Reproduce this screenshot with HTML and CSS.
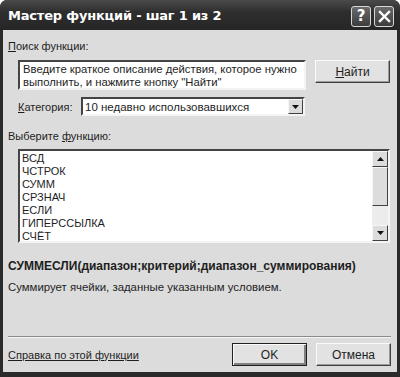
FILE: index.html
```html
<!DOCTYPE html>
<html lang="ru">
<head>
    <meta charset="UTF-8">
    <title>Мастер функций - шаг 1 из 2</title>
    <link rel="stylesheet" href="styles.css">
</head>
<body>
    <div class="window">
        <div class="titlebar">
            <span class="title">Мастер функций - шаг 1 из 2</span>
            <div class="title-buttons">
                <div class="tbtn">?</div>
                <div class="tbtn close">
                    <svg width="13" height="13" viewBox="0 0 13 13"><path d="M2 2 L11 11 M11 2 L2 11" stroke="#fff" stroke-width="2.4" stroke-linecap="square"/></svg>
                </div>
            </div>
        </div>

        <div class="body">
            <div class="label"><u>П</u>оиск функции:</div>

            <div class="search-row">
                <div class="textbox">Введите краткое описание действия, которое нужно<br>выполнить, и нажмите кнопку "Найти"</div>
                <div class="button"><u>Н</u>айти</div>
            </div>

            <div class="category-row">
                <span class="cat-label"><u>К</u>атегория:</span>
                <div class="combo">
                    <span class="combo-text">10 недавно использовавшихся</span>
                    <div class="combo-arrow">
                        <svg width="7" height="4" viewBox="0 0 7 4"><path d="M0 0 H7 L3.5 4 Z" fill="#111"/></svg>
                    </div>
                </div>
            </div>

            <div class="label list-label">Выберите <u>ф</u>ункцию:</div>

            <div class="listbox">
                <div class="items">
                    <div>ВСД</div>
                    <div>ЧСТРОК</div>
                    <div>СУММ</div>
                    <div>СРЗНАЧ</div>
                    <div>ЕСЛИ</div>
                    <div>ГИПЕРССЫЛКА</div>
                    <div>СЧЁТ</div>
                </div>
                <div class="scrollbar">
                    <div class="sb-btn">
                        <svg width="7" height="4" viewBox="0 0 7 4"><path d="M0 4 H7 L3.5 0 Z" fill="#111"/></svg>
                    </div>
                    <div class="sb-thumb"></div>
                    <div class="sb-track"></div>
                    <div class="sb-btn">
                        <svg width="7" height="4" viewBox="0 0 7 4"><path d="M0 0 H7 L3.5 4 Z" fill="#111"/></svg>
                    </div>
                </div>
            </div>

            <div class="syntax">СУММЕСЛИ(диапазон;критерий;диапазон_суммирования)</div>
            <div class="desc">Суммирует ячейки, заданные указанным условием.</div>

            <div class="separator"></div>

            <div class="footer">
                <a class="help-link" href="#">Справка по этой функции</a>
                <div class="footer-buttons">
                    <div class="button default">OK</div>
                    <div class="button">Отмена</div>
                </div>
            </div>
        </div>
    </div>
</body>
</html>
```

FILE: styles.css
```css
* {
    margin: 0;
    padding: 0;
    box-sizing: border-box;
}

body {
    background: #ffffff;
    font-family: "Liberation Sans", Arial, sans-serif;
    font-size: 11px;
    color: #1e1e1e;
}

.window {
    width: 400px;
    height: 377px;
    display: flex;
    flex-direction: column;
    background: #2a2a2a;
    border-radius: 7px 7px 0 0;
    overflow: hidden;
}

.titlebar {
    height: 30px;
    display: flex;
    align-items: center;
    justify-content: space-between;
    padding: 0 6px 0 8px;
    background: linear-gradient(#4a4a4a, #2e2e2e 40%, #262626);
}

.title {
    font-family: "DejaVu Sans", sans-serif;
    font-weight: bold;
    font-size: 13px;
    color: #ffffff;
    letter-spacing: -0.2px;
}

.title-buttons {
    display: flex;
    gap: 3px;
    margin-top: 2px;
}

.tbtn {
    width: 20px;
    height: 21px;
    border: 1px solid #d8d8d8;
    border-radius: 3px;
    background: linear-gradient(#6a6a6a, #3c3c3c);
    color: #fff;
    font-family: "DejaVu Sans", sans-serif;
    font-weight: bold;
    font-size: 15px;
    display: flex;
    align-items: center;
    justify-content: center;
}

.body {
    flex: 1;
    margin: 0 3px 5px 3px;
    background: #dcdcdc;
    padding: 10px 6px 0 5px;
    display: flex;
    flex-direction: column;
}

.label {
    line-height: 13px;
}

.search-row {
    display: flex;
    gap: 9px;
    margin: 7px 0 0 10px;
    align-items: flex-start;
}

.textbox {
    width: 288px;
    height: 30px;
    background: #ffffff;
    border: 2px solid;
    border-color: #444 #f4f4f4 #f4f4f4 #444;
    padding: 1px 3px 0;
    font-size: 11.3px;
    line-height: 13px;
    white-space: nowrap;
    overflow: hidden;
}

.button {
    width: 75px;
    height: 23px;
    display: flex;
    align-items: center;
    justify-content: center;
    background: #e2e2e2;
    border: 1px solid;
    border-color: #fafafa #404040 #404040 #fafafa;
    box-shadow: inset -1px -1px 0 #9a9a9a;
    font-size: 12px;
}

.button.default {
    border: 1px solid #202020;
    box-shadow: inset 1px 1px 0 #fafafa, inset -2px -2px 0 #808080;
}

.category-row {
    display: flex;
    align-items: center;
    margin: 7px 0 0 10px;
}

.cat-label {
    width: 63px;
}

.combo {
    width: 224px;
    height: 19px;
    background: #ffffff;
    border: 2px solid;
    border-color: #444 #f4f4f4 #f4f4f4 #444;
    display: flex;
    align-items: center;
    justify-content: space-between;
    font-size: 11.5px;
}

.combo-text {
    padding-left: 2px;
}

.combo-arrow {
    width: 15px;
    height: 15px;
    background: #dcdcdc;
    border: 1px solid;
    border-color: #f6f6f6 #404040 #404040 #f6f6f6;
    display: flex;
    align-items: center;
    justify-content: center;
}

.list-label {
    margin-top: 14px;
}

.listbox {
    display: flex;
    justify-content: space-between;
    margin: 6px 0 0 10px;
    width: 372px;
    height: 94px;
    background: #ffffff;
    border: 2px solid;
    border-color: #444 #f4f4f4 #f4f4f4 #444;
}

.items {
    padding: 1px 0 0 2px;
    line-height: 13px;
    overflow: hidden;
}

.scrollbar {
    width: 16px;
    display: flex;
    flex-direction: column;
    background: #ececec;
}

.sb-btn {
    height: 16px;
    background: #dcdcdc;
    border: 1px solid;
    border-color: #f6f6f6 #404040 #404040 #f6f6f6;
    display: flex;
    align-items: center;
    justify-content: center;
}

.sb-thumb {
    height: 39px;
    background: #dcdcdc;
    border: 1px solid;
    border-color: #f6f6f6 #404040 #404040 #f6f6f6;
}

.sb-track {
    flex: 1;
}

.syntax {
    margin-top: 16px;
    font-weight: bold;
    font-size: 12px;
    line-height: 14px;
}

.desc {
    margin-top: 8px;
    font-size: 11.4px;
    line-height: 13px;
}

.separator {
    margin-top: 42px;
    height: 2px;
    border-top: 1px solid #8a8a8a;
    border-bottom: 1px solid #f6f6f6;
}

.footer {
    display: flex;
    justify-content: space-between;
    align-items: center;
    margin-top: 5px;
}

.help-link {
    color: #1e1e1e;
    text-decoration: underline;
}

.footer-buttons {
    display: flex;
    gap: 9px;
}
```
